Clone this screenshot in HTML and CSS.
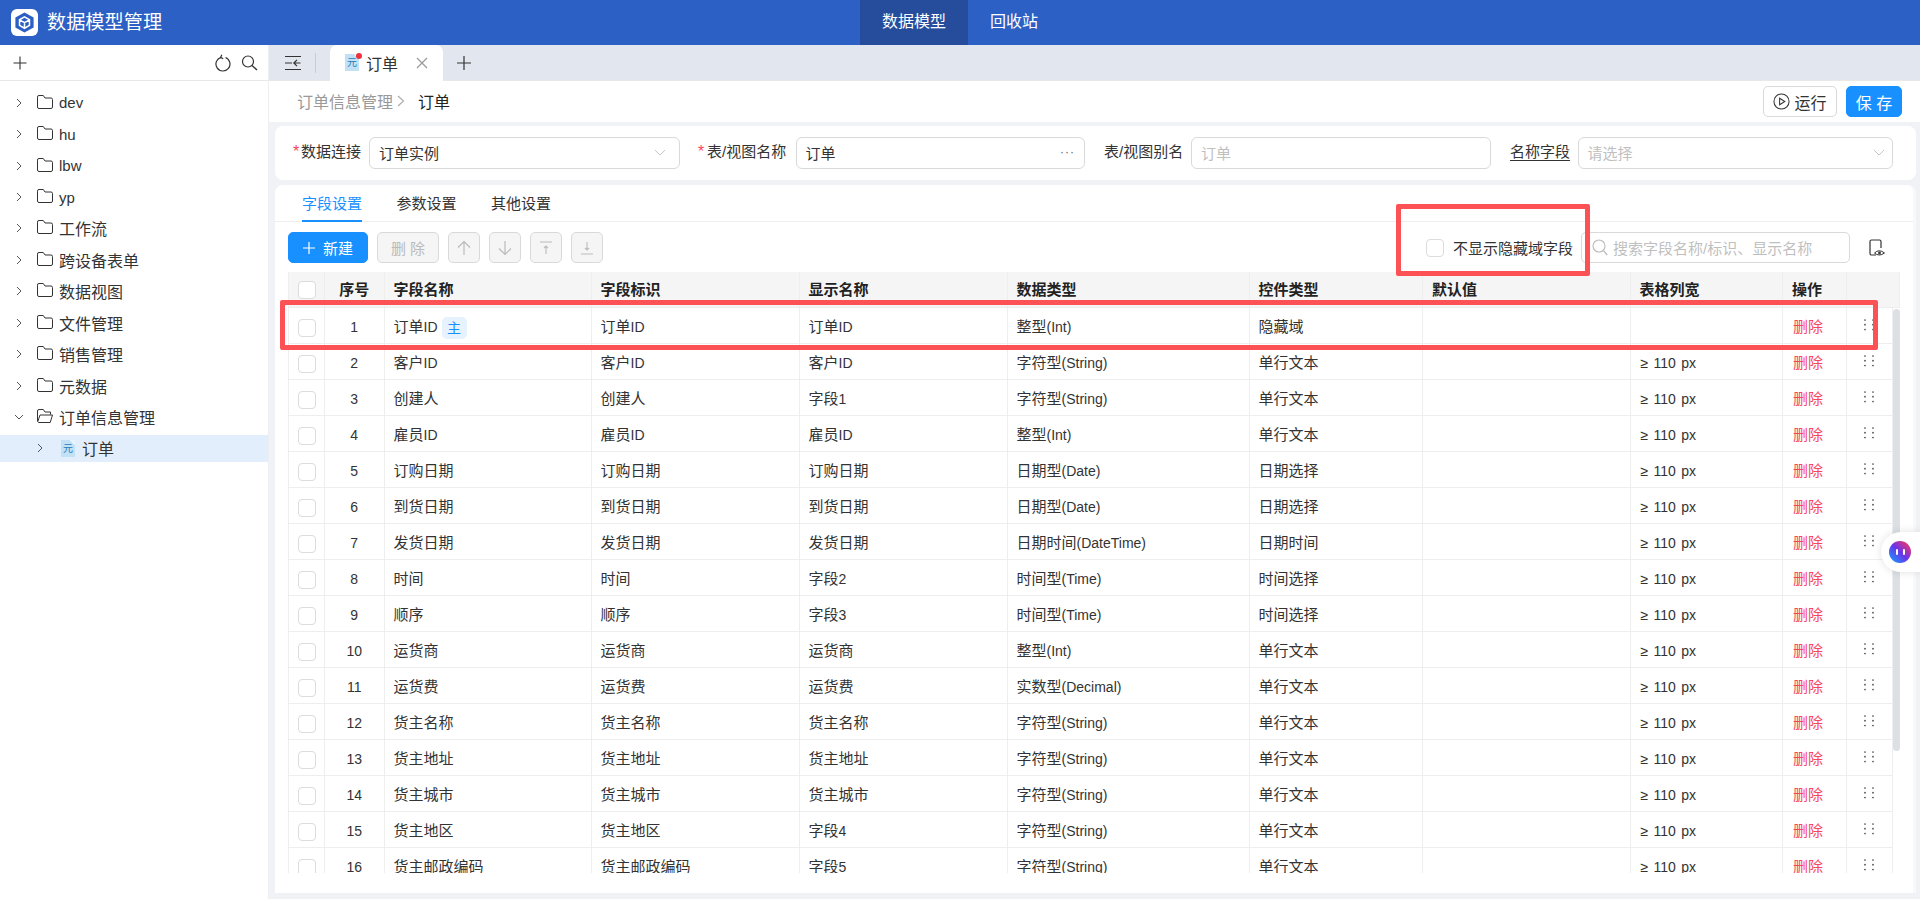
FILE: index.html
```html
<!DOCTYPE html>
<html lang="zh-CN">
<head>
<meta charset="utf-8">
<title>数据模型管理</title>
<link rel="stylesheet" href="styles.css">
</head>
<body>
<svg class="defs" width="0" height="0" aria-hidden="true">
  <symbol id="i-chev" viewBox="0 0 10 12"><path d="M3 2l4 4-4 4" fill="none" stroke="currentColor" stroke-width="1"/></symbol>
  <symbol id="i-folder" viewBox="0 0 16 14"><path d="M.5 2.200V12a1.500 1.500 0 0 0 1.500 1.500h12a1.500 1.500 0 0 0 1.500-1.500V4.400A1.500 1.500 0 0 0 14 3H8L6.300.5H2A1.500 1.500 0 0 0 .5 2.200z" fill="none" stroke="currentColor"/></symbol>
  <symbol id="i-down" viewBox="0 0 14 8"><path d="M1 1l6 6 6-6" fill="none" stroke="currentColor"/></symbol>
  <symbol id="i-drag" viewBox="0 0 10 12"><g fill="currentColor"><circle cx="1" cy="1" r=".85"/><circle cx="9" cy="1" r=".85"/><circle cx="1" cy="5.700" r=".85"/><circle cx="9" cy="5.700" r=".85"/><circle cx="1" cy="10.500" r=".85"/><circle cx="9" cy="10.500" r=".85"/></g></symbol>
</svg>

<header class="topbar">
  <div class="brand">
    <span class="logo">
      <svg width="23" height="23" viewBox="0 0 24 24"><path d="M12 1.500l9.500 5.300v10.400L12 22.500l-9.500-5.300V6.800z" fill="#2c5fc3"/><path d="M12 6.200l5.200 3v5.800L12 18l-5.200-3V9.200z M6.800 9.200L12 12.200l5.200-3M12 12.200V18" fill="none" stroke="#fff" stroke-width="1.600"/></svg>
    </span>
    <span class="brand-name">数据模型管理</span>
  </div>
  <nav class="nav">
    <a class="nav-item active">数据模型</a>
    <a class="nav-item">回收站</a>
  </nav>
</header>

<div class="shell">
  <aside class="side">
    <div class="side-tools">
      <svg class="plus" width="16" height="16" viewBox="0 0 16 16"><path d="M8 1.500v13M1.500 8h13" stroke="#333" stroke-width="1.100"/></svg>
      <span class="spacer"></span>
      <svg width="16" height="18" viewBox="0 0 16 18"><path d="M10.500 3.500A7 7 0 1 1 6 3.300" fill="none" stroke="#333" stroke-width="1.200"/><path d="M6.800.8L5.600 3.400 8.200 4.800" fill="none" stroke="#333" stroke-width="1.200"/></svg>
      <svg width="18" height="18" viewBox="0 0 18 18"><circle cx="8" cy="7.500" r="5.500" fill="none" stroke="#333" stroke-width="1.200"/><path d="M12 11.500l5 4.500" stroke="#333" stroke-width="1.400"/></svg>
    </div>
    <ul class="tree">
      <li class="node"><svg class="chev"><use href="#i-chev"/></svg><svg class="folder"><use href="#i-folder"/></svg><span class="en-tree">dev</span></li>
      <li class="node"><svg class="chev"><use href="#i-chev"/></svg><svg class="folder"><use href="#i-folder"/></svg><span class="en-tree">hu</span></li>
      <li class="node"><svg class="chev"><use href="#i-chev"/></svg><svg class="folder"><use href="#i-folder"/></svg><span class="en-tree">lbw</span></li>
      <li class="node"><svg class="chev"><use href="#i-chev"/></svg><svg class="folder"><use href="#i-folder"/></svg><span class="en-tree">yp</span></li>
      <li class="node"><svg class="chev"><use href="#i-chev"/></svg><svg class="folder"><use href="#i-folder"/></svg>工作流</li>
      <li class="node"><svg class="chev"><use href="#i-chev"/></svg><svg class="folder"><use href="#i-folder"/></svg>跨设备表单</li>
      <li class="node"><svg class="chev"><use href="#i-chev"/></svg><svg class="folder"><use href="#i-folder"/></svg>数据视图</li>
      <li class="node"><svg class="chev"><use href="#i-chev"/></svg><svg class="folder"><use href="#i-folder"/></svg>文件管理</li>
      <li class="node"><svg class="chev"><use href="#i-chev"/></svg><svg class="folder"><use href="#i-folder"/></svg>销售管理</li>
      <li class="node"><svg class="chev"><use href="#i-chev"/></svg><svg class="folder"><use href="#i-folder"/></svg>元数据</li>
      <li class="node"><svg class="chev open"><use href="#i-chev"/></svg><svg class="folder" viewBox="0 0 16 14"><path d="M.5 12V2A1.500 1.500 0 0 1 2 .5h4.300L8 3h5.500v2.500M.7 12.800L3 6h12.500l-2.300 7.500H2A1.500 1.500 0 0 1 .7 12.800z" fill="none" stroke="currentColor"/></svg>订单信息管理</li>
      <li class="node child selected"><svg class="chev"><use href="#i-chev"/></svg><span class="yuan small">元</span>订单</li>
    </ul>
  </aside>

  <main class="main">
    <div class="tabbar">
      <svg class="collapse" width="20" height="16" viewBox="0 0 20 16"><path d="M2 1.500h16M2 8h7M2 14.500h16M17.500 8H11M14 4.800L10.800 8l3.200 3.200" fill="none" stroke="#333" stroke-width="1.200"/></svg>
      <span class="tab-sep"></span>
      <div class="doc-tab">
        <span class="yuan">元<i class="dot"></i></span>
        <span class="doc-name">订单</span>
        <svg width="12" height="12" viewBox="0 0 12 12"><path d="M1 1l10 10M11 1L1 11" stroke="#999" stroke-width="1.200"/></svg>
      </div>
      <svg class="tab-add" width="14" height="14" viewBox="0 0 14 14"><path d="M7 0v14M0 7h14" stroke="#333" stroke-width="1.200"/></svg>
    </div>

    <div class="crumbs">
      <span class="crumb-parent">订单信息管理</span>
      <svg class="crumb-sep" width="8" height="14" viewBox="0 0 8 14"><path d="M1 2l5.500 5L1 12" fill="none" stroke="#aaa" stroke-width="1.100"/></svg>
      <span class="crumb-cur">订单</span>
      <span class="spacer"></span>
      <button class="btn btn-run"><svg width="17" height="17" viewBox="0 0 18 18"><circle cx="9" cy="9" r="8" fill="none" stroke="#333" stroke-width="1.100"/><path d="M7 5.500L12.500 9 7 12.500z" fill="none" stroke="#333" stroke-width="1.100"/></svg>运行</button>
      <button class="btn btn-save">保 存</button>
    </div>

    <section class="card form-card">
      <label class="lab l1"><i class="req">*</i>数据连接</label>
      <div class="input w1"><span>订单实例</span><svg class="caret"><use href="#i-down"/></svg></div>
      <label class="lab l2"><i class="req">*</i>表/视图名称</label>
      <div class="input w2"><span>订单</span><span class="more">···</span></div>
      <label class="lab l3">表/视图别名</label>
      <div class="input w3"><span class="ph">订单</span></div>
      <label class="lab l4"><span class="under">名称字段</span></label>
      <div class="input w4"><span class="ph">请选择</span><svg class="caret"><use href="#i-down"/></svg></div>
    </section>

    <section class="card table-card">
      <div class="sub-tabs">
        <a class="sub-tab on">字段设置</a>
        <a class="sub-tab">参数设置</a>
        <a class="sub-tab">其他设置</a>
      </div>
      <div class="toolbar">
        <button class="btn btn-new"><svg width="12" height="12" viewBox="0 0 13 13"><path d="M6.500 0v13M0 6.500h13" stroke="#fff" stroke-width="1.300"/></svg>新建</button>
        <button class="btn btn-off btn-del">删 除</button>
        <button class="btn btn-off btn-sq"><svg width="14" height="16" viewBox="0 0 14 16"><path d="M7 15V1.500M1 7.500l6-6 6 6" fill="none" stroke="#bbb" stroke-width="1.200"/></svg></button>
        <button class="btn btn-off btn-sq"><svg width="14" height="16" viewBox="0 0 14 16"><path d="M7 1v13.500M1 8.500l6 6 6-6" fill="none" stroke="#bbb" stroke-width="1.200"/></svg></button>
        <button class="btn btn-off btn-sq"><svg width="14" height="14" viewBox="0 0 14 14"><path d="M1 1h12M7 13V5M5 7l2-2 2 2" fill="none" stroke="#bbb" stroke-width="1.100"/></svg></button>
        <button class="btn btn-off btn-sq"><svg width="14" height="14" viewBox="0 0 14 14"><path d="M1 13h12M7 1v8M5 7l2 2 2-2" fill="none" stroke="#bbb" stroke-width="1.100"/></svg></button>
        <span class="spacer"></span>
        <label class="hide-check"><span class="box"></span>不显示隐藏域字段</label>
        <div class="search">
          <svg width="16" height="17" viewBox="0 0 16 17"><circle cx="7" cy="7" r="6" fill="none" stroke="#bbb" stroke-width="1.100"/><path d="M11.300 11.500l4 4.500" stroke="#bbb" stroke-width="1.200"/></svg>
          <span class="ph">搜索字段名称/标识、显示名称</span>
        </div>
        <svg class="eye" width="16" height="18" viewBox="0 0 16 18"><path d="M7 16H2.500A1.500 1.500 0 0 1 1 14.500v-12A1.500 1.500 0 0 1 2.500 1h8A1.500 1.500 0 0 1 12 2.500V9" fill="none" stroke="#333" stroke-width="1.200"/><path d="M5.500 14q4.500-4.500 10 0q-5.500 4-10 0z" fill="#fff" stroke="#333" stroke-width="1"/><circle cx="10.500" cy="14" r="1.400" fill="#333"/></svg>
      </div>

      <div class="grid-wrap">
        <div class="row head">
          <div class="cell cc"><span class="box"></span></div>
          <div class="cell ct">序号</div>
          <div class="cell">字段名称</div>
          <div class="cell">字段标识</div>
          <div class="cell">显示名称</div>
          <div class="cell">数据类型</div>
          <div class="cell">控件类型</div>
          <div class="cell">默认值</div>
          <div class="cell">表格列宽</div>
          <div class="cell">操作</div>
          <div class="cell"></div>
        </div>
        <div class="rows">
          <div class="row"><div class="cell cc"><span class="box"></span></div><div class="cell ct en">1</div><div class="cell">订单<span class="en">ID</span><span class="pk">主</span></div><div class="cell">订单<span class="en">ID</span></div><div class="cell">订单<span class="en">ID</span></div><div class="cell">整型<span class="en">(Int)</span></div><div class="cell">隐藏域</div><div class="cell"></div><div class="cell"></div><div class="cell del">删除</div><div class="cell drag"><svg><use href="#i-drag"/></svg></div></div>
          <div class="row"><div class="cell cc"><span class="box"></span></div><div class="cell ct en">2</div><div class="cell">客户<span class="en">ID</span></div><div class="cell">客户<span class="en">ID</span></div><div class="cell">客户<span class="en">ID</span></div><div class="cell">字符型<span class="en">(String)</span></div><div class="cell">单行文本</div><div class="cell"></div><div class="cell en wid">≥ 110 px</div><div class="cell del">删除</div><div class="cell drag"><svg><use href="#i-drag"/></svg></div></div>
          <div class="row"><div class="cell cc"><span class="box"></span></div><div class="cell ct en">3</div><div class="cell">创建人</div><div class="cell">创建人</div><div class="cell">字段<span class="en">1</span></div><div class="cell">字符型<span class="en">(String)</span></div><div class="cell">单行文本</div><div class="cell"></div><div class="cell en wid">≥ 110 px</div><div class="cell del">删除</div><div class="cell drag"><svg><use href="#i-drag"/></svg></div></div>
          <div class="row"><div class="cell cc"><span class="box"></span></div><div class="cell ct en">4</div><div class="cell">雇员<span class="en">ID</span></div><div class="cell">雇员<span class="en">ID</span></div><div class="cell">雇员<span class="en">ID</span></div><div class="cell">整型<span class="en">(Int)</span></div><div class="cell">单行文本</div><div class="cell"></div><div class="cell en wid">≥ 110 px</div><div class="cell del">删除</div><div class="cell drag"><svg><use href="#i-drag"/></svg></div></div>
          <div class="row"><div class="cell cc"><span class="box"></span></div><div class="cell ct en">5</div><div class="cell">订购日期</div><div class="cell">订购日期</div><div class="cell">订购日期</div><div class="cell">日期型<span class="en">(Date)</span></div><div class="cell">日期选择</div><div class="cell"></div><div class="cell en wid">≥ 110 px</div><div class="cell del">删除</div><div class="cell drag"><svg><use href="#i-drag"/></svg></div></div>
          <div class="row"><div class="cell cc"><span class="box"></span></div><div class="cell ct en">6</div><div class="cell">到货日期</div><div class="cell">到货日期</div><div class="cell">到货日期</div><div class="cell">日期型<span class="en">(Date)</span></div><div class="cell">日期选择</div><div class="cell"></div><div class="cell en wid">≥ 110 px</div><div class="cell del">删除</div><div class="cell drag"><svg><use href="#i-drag"/></svg></div></div>
          <div class="row"><div class="cell cc"><span class="box"></span></div><div class="cell ct en">7</div><div class="cell">发货日期</div><div class="cell">发货日期</div><div class="cell">发货日期</div><div class="cell">日期时间<span class="en">(DateTime)</span></div><div class="cell">日期时间</div><div class="cell"></div><div class="cell en wid">≥ 110 px</div><div class="cell del">删除</div><div class="cell drag"><svg><use href="#i-drag"/></svg></div></div>
          <div class="row"><div class="cell cc"><span class="box"></span></div><div class="cell ct en">8</div><div class="cell">时间</div><div class="cell">时间</div><div class="cell">字段<span class="en">2</span></div><div class="cell">时间型<span class="en">(Time)</span></div><div class="cell">时间选择</div><div class="cell"></div><div class="cell en wid">≥ 110 px</div><div class="cell del">删除</div><div class="cell drag"><svg><use href="#i-drag"/></svg></div></div>
          <div class="row"><div class="cell cc"><span class="box"></span></div><div class="cell ct en">9</div><div class="cell">顺序</div><div class="cell">顺序</div><div class="cell">字段<span class="en">3</span></div><div class="cell">时间型<span class="en">(Time)</span></div><div class="cell">时间选择</div><div class="cell"></div><div class="cell en wid">≥ 110 px</div><div class="cell del">删除</div><div class="cell drag"><svg><use href="#i-drag"/></svg></div></div>
          <div class="row"><div class="cell cc"><span class="box"></span></div><div class="cell ct en">10</div><div class="cell">运货商</div><div class="cell">运货商</div><div class="cell">运货商</div><div class="cell">整型<span class="en">(Int)</span></div><div class="cell">单行文本</div><div class="cell"></div><div class="cell en wid">≥ 110 px</div><div class="cell del">删除</div><div class="cell drag"><svg><use href="#i-drag"/></svg></div></div>
          <div class="row"><div class="cell cc"><span class="box"></span></div><div class="cell ct en">11</div><div class="cell">运货费</div><div class="cell">运货费</div><div class="cell">运货费</div><div class="cell">实数型<span class="en">(Decimal)</span></div><div class="cell">单行文本</div><div class="cell"></div><div class="cell en wid">≥ 110 px</div><div class="cell del">删除</div><div class="cell drag"><svg><use href="#i-drag"/></svg></div></div>
          <div class="row"><div class="cell cc"><span class="box"></span></div><div class="cell ct en">12</div><div class="cell">货主名称</div><div class="cell">货主名称</div><div class="cell">货主名称</div><div class="cell">字符型<span class="en">(String)</span></div><div class="cell">单行文本</div><div class="cell"></div><div class="cell en wid">≥ 110 px</div><div class="cell del">删除</div><div class="cell drag"><svg><use href="#i-drag"/></svg></div></div>
          <div class="row"><div class="cell cc"><span class="box"></span></div><div class="cell ct en">13</div><div class="cell">货主地址</div><div class="cell">货主地址</div><div class="cell">货主地址</div><div class="cell">字符型<span class="en">(String)</span></div><div class="cell">单行文本</div><div class="cell"></div><div class="cell en wid">≥ 110 px</div><div class="cell del">删除</div><div class="cell drag"><svg><use href="#i-drag"/></svg></div></div>
          <div class="row"><div class="cell cc"><span class="box"></span></div><div class="cell ct en">14</div><div class="cell">货主城市</div><div class="cell">货主城市</div><div class="cell">货主城市</div><div class="cell">字符型<span class="en">(String)</span></div><div class="cell">单行文本</div><div class="cell"></div><div class="cell en wid">≥ 110 px</div><div class="cell del">删除</div><div class="cell drag"><svg><use href="#i-drag"/></svg></div></div>
          <div class="row"><div class="cell cc"><span class="box"></span></div><div class="cell ct en">15</div><div class="cell">货主地区</div><div class="cell">货主地区</div><div class="cell">字段<span class="en">4</span></div><div class="cell">字符型<span class="en">(String)</span></div><div class="cell">单行文本</div><div class="cell"></div><div class="cell en wid">≥ 110 px</div><div class="cell del">删除</div><div class="cell drag"><svg><use href="#i-drag"/></svg></div></div>
          <div class="row"><div class="cell cc"><span class="box"></span></div><div class="cell ct en">16</div><div class="cell">货主邮政编码</div><div class="cell">货主邮政编码</div><div class="cell">字段<span class="en">5</span></div><div class="cell">字符型<span class="en">(String)</span></div><div class="cell">单行文本</div><div class="cell"></div><div class="cell en wid">≥ 110 px</div><div class="cell del">删除</div><div class="cell drag"><svg><use href="#i-drag"/></svg></div></div>
          <span class="scroll-thumb"></span>
        </div>
      </div>
    </section>
  </main>
</div>

<span class="mark mark-check"></span>
<span class="mark mark-row"></span>
<div class="assistant"><span class="ball"><i></i><i></i></span></div>
</body>
</html>
```
FILE: styles.css
```css
* { box-sizing: border-box; }
html, body { height: 100%; }
body {
  margin: 0;
  height: 899px;
  overflow: hidden;
  font-family: "Liberation Sans", "Noto Sans CJK SC", sans-serif;
  font-size: 15px;
  color: #333;
  background: #fff;
  position: relative;
}
.defs { position: absolute; }
.spacer { flex: 1; }
a { text-decoration: none; color: inherit; }
i { font-style: normal; }
ul { list-style: none; margin: 0; padding: 0; }
.en { font-size: 14px; }
.en-tree { font-size: 15px; }

/* top bar */
.topbar {
  height: 45px;
  background: #2c60c4;
  color: #fff;
  display: flex;
  align-items: center;
}
.brand { width: 860px; display: flex; align-items: center; padding-left: 11px; }
.logo {
  width: 27px; height: 27px;
  background: #fff;
  border-radius: 6px;
  display: flex; align-items: center; justify-content: center;
}
.brand-name { margin-left: 9px; font-size: 19.200px; line-height: 27px; }
.nav { display: flex; height: 45px; }
.nav-item { padding: 0 22px; line-height: 44px; font-size: 16px; }
.nav-item.active { background: #264d9c; }

/* layout */
.shell { display: flex; height: 854px; }

/* sidebar */
.side { width: 269px; background: #fff; border-right: 1px solid #eceef2; flex: none; }
.side-tools {
  height: 36px;
  border-bottom: 1px solid #e8e8e8;
  display: flex; align-items: center;
  padding: 0 10px 0 12px;
  gap: 9px;
}
.tree { padding-top: 6px; }
.node {
  height: 31.450px;
  display: flex; align-items: center;
  font-size: 16px;
  color: #333;
  padding-left: 14px;
}
.chev { width: 10px; height: 12px; color: #555; margin-right: 13px; flex: none; }
.chev.open { transform: rotate(90deg); }
.folder { width: 16px; height: 14px; color: #333; margin-right: 6px; flex: none; margin-top: -2px; }
.node.child { padding-left: 35px; background: #e3eefc; height: 27px; margin-top: 2px; }
.child .chev { margin-right: 16px; }
.yuan {
  width: 14px; height: 17px;
  background: linear-gradient(225deg, #e8f4fb 4px, #c3e1f6 4px);
  color: #2a7cb8;
  font-size: 10px;
  line-height: 17px;
  text-align: center;
  position: relative;
  flex: none;
}
.yuan.small { margin-right: 7px; }
.dot {
  position: absolute;
  right: -3px; top: -1px;
  width: 6px; height: 6px;
  border-radius: 50%;
  background: #f0313c;
}

/* main */
.main { flex: 1; min-width: 0; background: #f0f2f6; display: flex; flex-direction: column; }
.tabbar {
  height: 36px;
  background: #e2e6ef;
  border-bottom: 1px solid #e8e8e8;
  display: flex; align-items: center;
}
.collapse { margin-left: 14px; }
.tab-sep { width: 1px; height: 20px; background: #c8ccd4; margin-left: 12px; }
.doc-tab {
  width: 113px; height: 36px;
  margin-left: 14px;
  background: #fff;
  border-radius: 7px 7px 0 0;
  display: flex; align-items: center;
  padding-left: 15px;
}
.doc-name { font-size: 16px; margin: 0 18px 0 7px; color: #333; }
.tab-add { margin-left: 14px; }

.crumbs {
  height: 41px;
  background: #fff;
  display: flex; align-items: center;
  padding: 0 18px 0 28px;
  font-size: 16px;
}
.crumb-parent { color: #999; margin-top: -2px; }
.crumb-sep { margin: -2px 13px 0 4px; }
.crumb-cur { color: #222; margin-top: -2px; }

.btn {
  font-family: inherit;
  font-size: 15px;
  height: 31px;
  border-radius: 5px;
  border: 1px solid #d9d9d9;
  display: inline-flex; align-items: center; justify-content: center;
  padding: 0;
  background: #fff;
  color: #333;
}
.btn-run { width: 74px; font-size: 16px; gap: 4px; margin-right: 9px; }
.btn-save { width: 56px; font-size: 16px; background: #1890ff; border-color: #1890ff; color: #fff; white-space: pre; }

.card { background: #fff; margin-left: 6px; margin-right: 4px; }
.form-card {
  height: 54px;
  margin-top: 4px;
  border-radius: 8px;
  display: flex; align-items: center;
  padding-left: 18px;
}
.lab { white-space: nowrap; font-size: 15px; margin-top: -6px; flex: none; }
.l1 { width: 76px; }
.l2 { width: 97.500px; }
.l3 { width: 87px; }
.l4 { width: 67.500px; }
.req { color: #f5475c; display: inline-block; width: 8px; font-size: 16px; }
.l2 .req { width: 9px; }
.under { text-decoration: underline; text-underline-offset: 3px; }
.input {
  height: 32px;
  border: 1px solid #d9d9d9;
  border-radius: 6px;
  display: flex; align-items: center; justify-content: space-between;
  padding: 0 9px 2px;
  margin-right: 19px;
  flex: none;
}
.w1 { width: 311px; margin-right: 18px; }
.w2 { width: 289.500px; }
.w3 { width: 300px; }
.w4 { width: 315px; margin-right: 0; }
.ph { color: #bfbfbf; }
.caret { width: 12px; height: 7px; color: #bbb; }
.w1 .caret { margin-right: 4px; }
.w4 .caret { margin-right: -2px; }
.more { font-size: 12px; color: #666; letter-spacing: 1px; }

.table-card {
  height: 708px;
  margin-top: 5px;
  border-radius: 8px 8px 0 0;
  border-right: 3px solid #f8f9fb;
  display: flex; flex-direction: column;
}
.sub-tabs {
  height: 37px;
  border-bottom: 1px solid #eee;
  display: flex;
  padding-left: 27px;
  gap: 34.500px;
}
.sub-tab { line-height: 37px; height: 37px; color: #333; }
.sub-tab.on { color: #1890ff; border-bottom: 2px solid #1890ff; }

.toolbar {
  height: 50px;
  padding: 10px 28px 9px 13px;
  display: flex; align-items: center;
  gap: 9px;
}
.btn-new { width: 80px; background: #1890ff; border-color: #1890ff; color: #fff; gap: 8px; }
.btn-off { background: #f5f5f5; color: #bbb; }
.btn-del { width: 62px; white-space: pre; }
.btn-sq { width: 32px; }
.hide-check { display: flex; align-items: center; gap: 9px; margin-right: -1px; white-space: nowrap; }
.box {
  display: inline-block;
  width: 18px; height: 18px;
  border: 1px solid #dcdcdc;
  border-radius: 4px;
  background: #fff;
  flex: none;
}
.search {
  width: 269px; height: 31px;
  border: 1px solid #d9d9d9;
  border-radius: 5px;
  display: flex; align-items: center;
  padding-left: 10px;
  gap: 5px;
}
.eye { margin-left: 10px; flex: none; }

/* grid */
.grid-wrap { margin-left: 13px; width: 1612px; }
.row {
  display: grid;
  grid-template-columns: 37px 59.500px 207px 208px 208px 242px 173.500px 207.500px 152.500px 63.500px 46.500px;
  height: 36px;
  border-bottom: 1px solid #eee;
}
.row.head {
  grid-template-columns: 37px 59.500px 207px 208px 208px 242px 173.500px 207.500px 152.500px 63.500px 53.500px;
  background: #f5f5f5;
  font-weight: 700;
  color: #222;
}
.rows { position: relative; height: 565px; overflow: hidden; width: 1612px; }
.rows .row { width: 1605px; }
.cell {
  border-right: 1px solid #eee;
  line-height: 38px;
  padding-left: 9px;
  white-space: nowrap;
  min-width: 0;
}
.row.head .cell { line-height: 36px; }
.row .cell:first-child { border-left: 1px solid #eee; }
.cell.ct { text-align: center; padding-left: 0; }
.cell.cc { display: flex; align-items: center; justify-content: center; padding: 1px 0 0; }
.head .cell.cc { padding: 0; }
.wid { padding-left: 10px; word-spacing: 1.500px; }
.del { color: #f5475c; padding-left: 10px; }
.drag { display: flex; align-items: center; padding: 0 0 4px 17px; }
.drag svg { width: 10px; height: 12px; color: #444; }
.pk {
  display: inline-block;
  width: 25px; height: 22px;
  background: #e6f2fd;
  color: #1890ff;
  border-radius: 5px;
  margin-left: 4px;
  font-size: 14px;
  line-height: 22px;
  text-align: center;
  vertical-align: middle;
}
.scroll-thumb {
  position: absolute;
  right: 0; top: 1px;
  width: 7px; height: 442px;
  background: #dcdfe4;
  border-radius: 4px;
}

/* overlays */
.mark { position: absolute; border: 5px solid #fc5255; border-radius: 2px; }
.mark-check { left: 1396px; top: 204px; width: 194px; height: 72px; }
.mark-row { left: 280px; top: 300px; width: 1598px; height: 50px; }
.assistant {
  position: absolute;
  left: 1881px; top: 532px;
  width: 39px; height: 40px;
  background: #fff;
  border-radius: 20px 0 0 20px;
  box-shadow: 0 0 8px rgba(0,0,0,.12);
  padding: 9px 0 0 8px;
}
.ball {
  width: 22px; height: 22px;
  border-radius: 50%;
  background: linear-gradient(45deg, #1e90ff 10%, #6a35e8 50%, #f0356b 90%);
  display: flex; align-items: center; justify-content: center;
  gap: 5px;
}
.ball i { width: 2px; height: 6px; background: #fff; border-radius: 1px; }
```
